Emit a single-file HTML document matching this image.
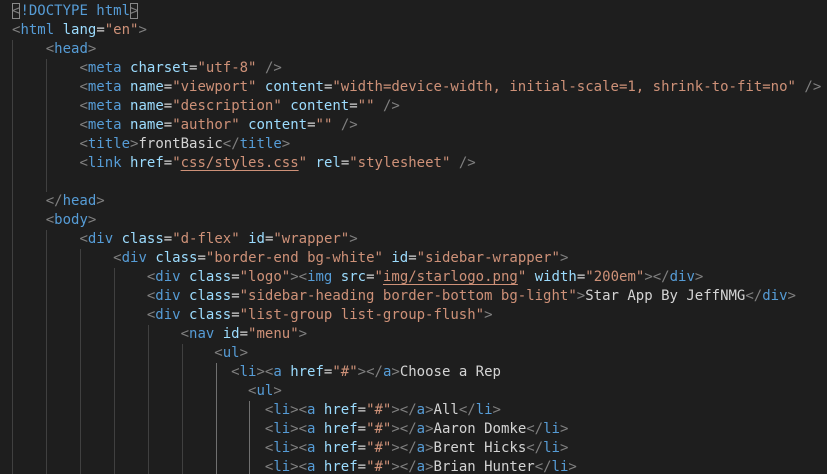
<!DOCTYPE html>
<html><head><meta charset="utf-8"><style>
html,body{margin:0;padding:0;background:#1e1e1e;width:827px;height:474px;overflow:hidden}
#c{position:relative;font-family:"DejaVu Sans Mono","Liberation Mono",monospace;font-size:14px;line-height:19px;color:#d4d4d4;white-space:pre;padding-left:12px;padding-top:2px;height:472px;overflow:hidden}
.b{color:#808080}.t{color:#569cd6}.a{color:#9cdcfe}.s{color:#ce9178}
.u{text-decoration:underline;text-decoration-color:#ce9178;text-underline-offset:3px}
.m{outline:1px solid #888;outline-offset:-1px}
.g{position:absolute;width:1px;background:#404040}
.ga{background:#707070}
</style></head><body><div id="c"><div><span class="b m">&lt;</span><span class="t">!DOCTYPE html</span><span class="b m">&gt;</span></div><div><span class="b">&lt;</span><span class="t">html</span> <span class="a">lang</span>=<span class="s">"en"</span><span class="b">&gt;</span></div><div>    <span class="b">&lt;</span><span class="t">head</span><span class="b">&gt;</span></div><div>        <span class="b">&lt;</span><span class="t">meta</span> <span class="a">charset</span>=<span class="s">"utf-8"</span> <span class="b">/&gt;</span></div><div>        <span class="b">&lt;</span><span class="t">meta</span> <span class="a">name</span>=<span class="s">"viewport"</span> <span class="a">content</span>=<span class="s">"width=device-width, initial-scale=1, shrink-to-fit=no"</span> <span class="b">/&gt;</span></div><div>        <span class="b">&lt;</span><span class="t">meta</span> <span class="a">name</span>=<span class="s">"description"</span> <span class="a">content</span>=<span class="s">""</span> <span class="b">/&gt;</span></div><div>        <span class="b">&lt;</span><span class="t">meta</span> <span class="a">name</span>=<span class="s">"author"</span> <span class="a">content</span>=<span class="s">""</span> <span class="b">/&gt;</span></div><div>        <span class="b">&lt;</span><span class="t">title</span><span class="b">&gt;</span>frontBasic<span class="b">&lt;/</span><span class="t">title</span><span class="b">&gt;</span></div><div>        <span class="b">&lt;</span><span class="t">link</span> <span class="a">href</span>=<span class="s">"<span class="u">css/styles.css</span>"</span> <span class="a">rel</span>=<span class="s">"stylesheet"</span> <span class="b">/&gt;</span></div><div> </div><div>    <span class="b">&lt;/</span><span class="t">head</span><span class="b">&gt;</span></div><div>    <span class="b">&lt;</span><span class="t">body</span><span class="b">&gt;</span></div><div>        <span class="b">&lt;</span><span class="t">div</span> <span class="a">class</span>=<span class="s">"d-flex"</span> <span class="a">id</span>=<span class="s">"wrapper"</span><span class="b">&gt;</span></div><div>            <span class="b">&lt;</span><span class="t">div</span> <span class="a">class</span>=<span class="s">"border-end bg-white"</span> <span class="a">id</span>=<span class="s">"sidebar-wrapper"</span><span class="b">&gt;</span></div><div>                <span class="b">&lt;</span><span class="t">div</span> <span class="a">class</span>=<span class="s">"logo"</span><span class="b">&gt;&lt;</span><span class="t">img</span> <span class="a">src</span>=<span class="s">"<span class="u">img/starlogo.png</span>"</span> <span class="a">width</span>=<span class="s">"200em"</span><span class="b">&gt;&lt;/</span><span class="t">div</span><span class="b">&gt;</span></div><div>                <span class="b">&lt;</span><span class="t">div</span> <span class="a">class</span>=<span class="s">"sidebar-heading border-bottom bg-light"</span><span class="b">&gt;</span>Star App By JeffNMG<span class="b">&lt;/</span><span class="t">div</span><span class="b">&gt;</span></div><div>                <span class="b">&lt;</span><span class="t">div</span> <span class="a">class</span>=<span class="s">"list-group list-group-flush"</span><span class="b">&gt;</span></div><div>                    <span class="b">&lt;</span><span class="t">nav</span> <span class="a">id</span>=<span class="s">"menu"</span><span class="b">&gt;</span></div><div>                        <span class="b">&lt;</span><span class="t">ul</span><span class="b">&gt;</span></div><div>                          <span class="b">&lt;</span><span class="t">li</span><span class="b">&gt;&lt;</span><span class="t">a</span> <span class="a">href</span>=<span class="s">"#"</span><span class="b">&gt;&lt;/</span><span class="t">a</span><span class="b">&gt;</span>Choose a Rep</div><div>                            <span class="b">&lt;</span><span class="t">ul</span><span class="b">&gt;</span></div><div>                              <span class="b">&lt;</span><span class="t">li</span><span class="b">&gt;&lt;</span><span class="t">a</span> <span class="a">href</span>=<span class="s">"#"</span><span class="b">&gt;&lt;/</span><span class="t">a</span><span class="b">&gt;</span>All<span class="b">&lt;/</span><span class="t">li</span><span class="b">&gt;</span></div><div>                              <span class="b">&lt;</span><span class="t">li</span><span class="b">&gt;&lt;</span><span class="t">a</span> <span class="a">href</span>=<span class="s">"#"</span><span class="b">&gt;&lt;/</span><span class="t">a</span><span class="b">&gt;</span>Aaron Domke<span class="b">&lt;/</span><span class="t">li</span><span class="b">&gt;</span></div><div>                              <span class="b">&lt;</span><span class="t">li</span><span class="b">&gt;&lt;</span><span class="t">a</span> <span class="a">href</span>=<span class="s">"#"</span><span class="b">&gt;&lt;/</span><span class="t">a</span><span class="b">&gt;</span>Brent Hicks<span class="b">&lt;/</span><span class="t">li</span><span class="b">&gt;</span></div><div>                              <span class="b">&lt;</span><span class="t">li</span><span class="b">&gt;&lt;</span><span class="t">a</span> <span class="a">href</span>=<span class="s">"#"</span><span class="b">&gt;&lt;/</span><span class="t">a</span><span class="b">&gt;</span>Brian Hunter<span class="b">&lt;/</span><span class="t">li</span><span class="b">&gt;</span></div>
<div class="g" style="left:12px;top:40px;height:436px"></div>
<div class="g" style="left:46px;top:59px;height:133px"></div>
<div class="g" style="left:46px;top:230px;height:246px"></div>
<div class="g" style="left:80px;top:249px;height:227px"></div>
<div class="g" style="left:114px;top:268px;height:208px"></div>
<div class="g" style="left:148px;top:325px;height:151px"></div>
<div class="g" style="left:182px;top:344px;height:132px"></div>
<div class="g ga" style="left:216px;top:363px;height:113px"></div>
<div class="g ga" style="left:249px;top:401px;height:75px"></div>
</div></body></html>
